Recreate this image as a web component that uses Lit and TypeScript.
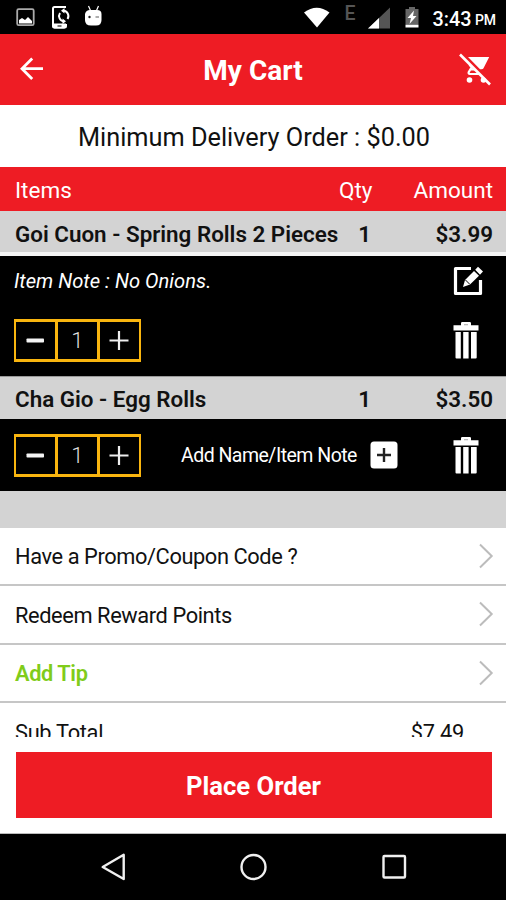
import { LitElement, html, css } from "lit";
import { customElement, property } from "lit/decorators.js";

interface CartItem {
  name: string;
  qty: number;
  amount: string;
  note?: string;
}

const items: CartItem[] = [
  { name: "Goi Cuon - Spring Rolls 2 Pieces", qty: 1, amount: "$3.99", note: "Item Note : No Onions." },
  { name: "Cha Gio - Egg Rolls", qty: 1, amount: "$3.50" },
];

const trash = html`<svg class="trash" width="26" height="38" viewBox="0 0 26 38">
  <path fill="#fff" d="M.5 4.2H8V2.2Q8 1 9.2 1h7.6Q18 1 18 2.2V4.2H25.5V9.5H.5Z" />
  <path fill="#bbb" d="M11 3h4v1.3h-4z" />
  <path fill="#fff" d="M2.5 11H7.8V37.5H3.5Q2.5 37.5 2.5 36.5ZM10.2 11H15.6V37.5H10.2ZM18 11H23.7V36.5Q23.7 37.5 22.7 37.5H18Z" />
</svg>`;

const chevron = html`<svg width="16" height="26" viewBox="0 0 16 26"><path d="M2 1.5L13.7 13L2 24.5" fill="none" stroke="#bcbcbc" stroke-width="2" /></svg>`;

@customElement("qty-stepper")
export class QtyStepper extends LitElement {
  @property({ type: Number }) value = 1;
  static styles = css`
    :host { display: block; }
    .box {
      box-sizing: border-box;
      width: 127px;
      height: 43px;
      display: grid;
      grid-template-columns: 39.5px 39.5px 39.5px;
      column-gap: 2.5px;
      background: #f9b50f;
      padding: 3px 1.7px;
    }
    .cell {
      box-sizing: border-box;
      background: #000;
      color: #ddd;
      display: flex;
      align-items: center;
      justify-content: center;
      font: 300 22px/36px Roboto, sans-serif;
      padding-top: 1px;
    }
  `;
  render() {
    return html`<div class="box">
      <div class="cell"><svg width="20" height="20" viewBox="0 0 20 20"><rect x="1.5" y="7.4" width="17.5" height="4.2" rx=".8" fill="#f4f4f4" /></svg></div>
      <div class="cell">${this.value}</div>
      <div class="cell"><svg width="20" height="20" viewBox="0 0 20 20"><path d="M.5 9.5h19M10 0v19" stroke="#eee" stroke-width="2.2" /></svg></div>
    </div>`;
  }
}

@customElement("app-root")
export class AppRoot extends LitElement {
  static styles = css`
    :host {
      display: flex;
      flex-direction: column;
      width: 506px;
      height: 900px;
      overflow: hidden;
      background: #fff;
      color: #111;
      font-family: Roboto, "Liberation Sans", sans-serif;
      white-space: nowrap;
    }
    * { box-sizing: border-box; }
    svg { display: block; flex: none; }
    .status { height: 34px; background: #000; flex: none; display: flex; }
    .bar {
      height: 70.5px;
      flex: none;
      background: #ee1c24;
      color: #fff;
      display: grid;
      grid-template-columns: 64px 1fr 64px;
      align-items: center;
    }
    .title { font-size: 28px; font-weight: 700; text-align: center; padding-top: 3px; }
    .back { margin-left: 19px; }
    .cart-off { margin-left: 16px; }
    .minimum { height: 62.5px; flex: none; text-align: center; font-size: 25.3px; line-height: 66px; padding-left: 2px; }
    .cols {
      display: grid;
      grid-template-columns: 324px 48px 1fr;
      align-items: center;
      flex: none;
      padding: 3px 13px 0 15px;
    }
    .head { height: 44px; background: #ee1c24; color: #fff; font-size: 22.5px; padding-top: 2px; }
    .row { height: 41px; background: #d3d3d3; font-size: 22.4px; font-weight: 600; padding-top: 5px; }
    .num { text-align: right; }
    .head .num:nth-child(2) { padding-right: 15px; }
    .row .num:nth-child(2) { padding-right: 16px; }
    .row.second { height: 43px; border-top: 1px solid #999; padding-top: 2px; }
    .noted { height: 124px; flex: none; background: #000; color: #fff; border-top: 4px solid #f5f5f5; }
    .line { display: flex; align-items: center; padding: 0 27px 0 14px; }
    .note { font-style: italic; font-size: 20.2px; flex: 1; }
    .noteline { height: 50px; padding-right: 22px; }
    .qtyline { height: 68px; justify-content: space-between; }
    .plain { height: 72px; flex: none; background: #000; color: #fff; }
    .add { margin-left: 40px; font-size: 19.5px; letter-spacing: -0.52px; }
    .plus { margin-left: 13px; }
    .plain .trash { margin-left: auto; }
    .gap { height: 36.5px; flex: none; background: #d3d3d3; }
    .link {
      height: 58.5px;
      flex: none;
      display: flex;
      justify-content: space-between;
      align-items: center;
      border-bottom: 2px solid #c6c6c6;
      padding: 0 12px 0 15px;
      font-size: 21.8px;
      letter-spacing: -0.4px;
    }
    .link span { padding-top: 2px; }
    .tip { color: #80cc1a; font-weight: 600; }
    .totals { height: 34px; flex: none; overflow: hidden; display: flex; justify-content: space-between; padding: 15.5px 42px 0 15px; font-size: 21.8px; letter-spacing: -0.3px; line-height: 28px; }
    .foot { height: 97px; flex: none; padding: 15px 14.5px 0 15.5px; border-bottom: 1px solid #bbb; }
    .order { height: 65.5px; background: #ee1c24; color: #fff; font-size: 25.6px; font-weight: 700; line-height: 69px; text-align: center; }
    .nav { flex: 1; background: #000; }
  `;

  private statusBar() {
    return html`<svg width="506" height="34" viewBox="0 0 506 34">
      <rect x="17.2" y="9.2" width="16.5" height="16" rx="1.5" fill="none" stroke="#aaa" stroke-width="1.8" />
      <path fill="#fff" d="M19 23.5V20l3-2 3 2 3-3 4 4v2.5Z" />
      <path d="M65 8V7H54.5Q53 7 53 8.5V26Q53 27.5 54.5 27.5H64.5Q66 27.5 66 26V24" fill="none" stroke="#fff" stroke-width="2" />
      <path fill="#fff" d="M52.5 23.5H66V26.5Q66 28.5 64 28.5H54.5Q52.5 28.5 52.5 26.5Z" />
      <path stroke="#222" stroke-width="1.2" d="M57.5 26h4" />
      <path d="M63 10.5A5.5 5.5 0 0 1 67.5 19M64 21.5A5.5 5.5 0 0 1 60 13" fill="none" stroke="#fff" stroke-width="2" />
      <path fill="#fff" d="M64.5 8v5.5L61 10.7zM62.5 24v-5.5l3.5 2.8z" />
      <path fill="#fff" d="M85 14Q86 10 90 10H97Q101.5 10 101.5 14V20Q101.5 25.5 96 25.5H91Q85 25.5 85 20Z" />
      <path stroke="#fff" stroke-width="1.2" d="M88.5 6l2 4.5M98.5 6l-2 4.5" />
      <circle cx="89.5" cy="17" r="1.2" fill="#222" /><path stroke="#777" stroke-width="1.2" d="M95.5 17h3.5" />
      <path fill="#fff" d="M304 12.5Q316.7 3 329.5 12.5L317 27.5Z" />
      <text x="344.5" y="19.5" font-size="19.5" font-weight="500" fill="#555">E</text>
      <path fill="#555" d="M390 7.5V28.5H368Z" />
      <path fill="#fff" d="M379 18V28.5H368Z" />
      <path fill="#666" d="M405.5 9H409V7H415V9H418.5V24H405.5Z" />
      <path fill="#fff" d="M405.5 24.5H418.5V27.5H405.5ZM414 10.5L407.5 18H411L409.5 24L416.5 16H413Z" />
      <text x="432.5" y="25.5" font-size="20" font-weight="500" fill="#fff" textLength="39" lengthAdjust="spacingAndGlyphs">3:43</text>
      <text x="475" y="25" font-size="14" font-weight="500" fill="#fff" textLength="21">PM</text>
    </svg>`;
  }

  render() {
    return html`
      <div class="status">${this.statusBar()}</div>
      <div class="bar">
        <svg class="back" width="26" height="26" viewBox="0 0 26 26"><path d="M13.2 2.5L3 12.7L13.2 23M3 12.7H24" fill="none" stroke="#fff" stroke-width="2.8" /></svg>
        <div class="title">My Cart</div>
        <svg class="cart-off" width="34" height="34" viewBox="0 0 34 34">
          <path fill="#fff" d="M10 5H31.2L25.5 16.3Q25 17.3 23.5 17.3H22Z" />
          <path d="M11.5 12.5L13.5 15.5L10.8 20Q10 22 12 22H21M12.5 17.5H17" fill="none" stroke="#fff" stroke-width="2.2" />
          <circle cx="11.5" cy="28" r="2.8" fill="#fff" /><circle cx="25.5" cy="28" r="2.8" fill="#fff" />
          <path d="M3.5 1L33.5 31" stroke="#ee1c24" stroke-width="2" />
          <path d="M2 2.5L32 32.5" stroke="#fff" stroke-width="2.6" />
        </svg>
      </div>
      <div class="minimum">Minimum Delivery Order : $0.00</div>
      <div class="cols head"><span>Items</span><span class="num">Qty</span><span class="num">Amount</span></div>
      ${items.map(
        (it, i) => html`
          <div class="cols row ${i ? "second" : ""}">
            <span>${it.name}</span><span class="num">${it.qty}</span><span class="num">${it.amount}</span>
          </div>
          ${it.note
            ? html`<div class="noted">
                <div class="line noteline">
                  <span class="note">${it.note}</span>
                  <svg width="31" height="31" viewBox="0 0 31 31">
                    <path d="M18 2.5H2.5V27.5H27.5V14" fill="none" stroke="#fff" stroke-width="3.2" stroke-linejoin="round" />
                    <path fill="#fff" d="M10 21L12 14L21 5L26 9.7L17 18.500ZM22.200 3.800L25 .8L30 5.500L27 8.700Z" />
                    <path d="M12.500 14L16.700 18.200" stroke="#000" stroke-width="1" />
                  </svg>
                </div>
                <div class="line qtyline"><qty-stepper .value=${it.qty}></qty-stepper>${trash}</div>
              </div>`
            : html`<div class="line plain">
                <qty-stepper .value=${it.qty}></qty-stepper>
                <span class="add">Add Name/Item Note</span>
                <svg class="plus" width="28" height="28" viewBox="0 0 28 28"><rect x=".5" y=".5" width="27" height="27" rx="3.5" fill="#fff" /><path d="M7 14h14M14 7v14" stroke="#222" stroke-width="2.4" /></svg>
                ${trash}
              </div>`}
        `
      )}
      <div class="gap"></div>
      <div class="link"><span>Have a Promo/Coupon Code ?</span>${chevron}</div>
      <div class="link"><span>Redeem Reward Points</span>${chevron}</div>
      <div class="link"><span class="tip">Add Tip</span>${chevron}</div>
      <div class="totals"><span>Sub Total</span><span>$7.49</span></div>
      <div class="foot"><div class="order">Place Order</div></div>
      <div class="nav">
        <svg width="506" height="66" viewBox="0 0 506 66" fill="none" stroke="#f0f0f0" stroke-width="2.4">
          <path d="M123.7 20.8V45L102.700 33Z" stroke-linejoin="round" />
          <circle cx="253.5" cy="33" r="12" />
          <rect x="383.5" y="22" width="21.5" height="21.5" rx="1" />
        </svg>
      </div>
    `;
  }
}
